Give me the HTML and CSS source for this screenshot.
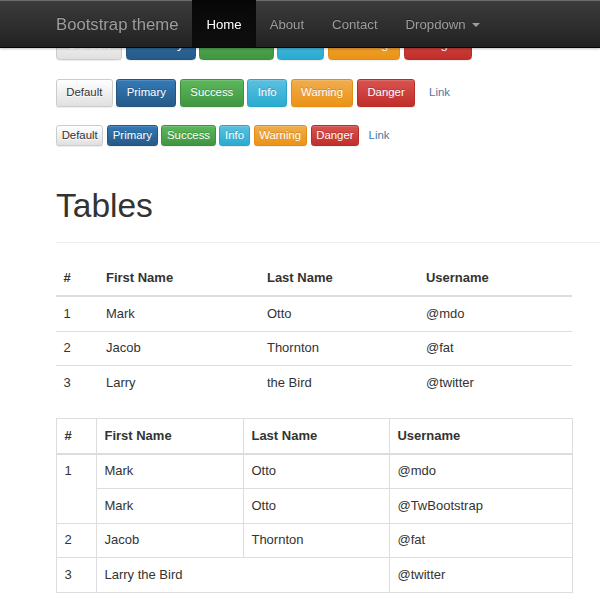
FILE: index.html
```html
<!DOCTYPE html>
<html lang="en">
<head>
<meta charset="utf-8">
<title>Bootstrap theme</title>
<link rel="stylesheet" href="styles.css">
</head>
<body>
<nav class="navbar">
  <a class="brand" href="#">Bootstrap theme</a>
  <ul class="nav">
    <li><a class="nav-link active" href="#">Home</a></li>
    <li><a class="nav-link" href="#">About</a></li>
    <li><a class="nav-link" href="#">Contact</a></li>
    <li><a class="nav-link" href="#">Dropdown <span class="caret"></span></a></li>
  </ul>
</nav>

<main class="main">
  <p class="btn-row">
    <button class="btn btn-default">Default</button>
    <button class="btn btn-primary">Primary</button>
    <button class="btn btn-success">Success</button>
    <button class="btn btn-info">Info</button>
    <button class="btn btn-warning">Warning</button>
    <button class="btn btn-danger">Danger</button>
    <button class="btn btn-link">Link</button>
  </p>
  <p class="btn-row">
    <button class="btn btn-sm btn-default">Default</button>
    <button class="btn btn-sm btn-primary">Primary</button>
    <button class="btn btn-sm btn-success">Success</button>
    <button class="btn btn-sm btn-info">Info</button>
    <button class="btn btn-sm btn-warning">Warning</button>
    <button class="btn btn-sm btn-danger">Danger</button>
    <button class="btn btn-sm btn-link">Link</button>
  </p>
  <p class="btn-row">
    <button class="btn btn-xs btn-default">Default</button>
    <button class="btn btn-xs btn-primary">Primary</button>
    <button class="btn btn-xs btn-success">Success</button>
    <button class="btn btn-xs btn-info">Info</button>
    <button class="btn btn-xs btn-warning">Warning</button>
    <button class="btn btn-xs btn-danger">Danger</button>
    <button class="btn btn-xs btn-link">Link</button>
  </p>

  <div class="page-header">
    <h1>Tables</h1>
  </div>

  <table class="table t-plain">
    <colgroup>
      <col class="w-num"><col class="w-first"><col class="w-last"><col class="w-user">
    </colgroup>
    <thead>
      <tr><th>#</th><th>First Name</th><th>Last Name</th><th>Username</th></tr>
    </thead>
    <tbody>
      <tr><td>1</td><td>Mark</td><td>Otto</td><td>@mdo</td></tr>
      <tr><td>2</td><td>Jacob</td><td>Thornton</td><td>@fat</td></tr>
      <tr><td>3</td><td>Larry</td><td>the Bird</td><td>@twitter</td></tr>
    </tbody>
  </table>

  <table class="table table-bordered t-bordered">
    <colgroup>
      <col class="w-num"><col class="w-first"><col class="w-last"><col class="w-user">
    </colgroup>
    <thead>
      <tr><th>#</th><th>First Name</th><th>Last Name</th><th>Username</th></tr>
    </thead>
    <tbody>
      <tr><td rowspan="2">1</td><td>Mark</td><td>Otto</td><td>@mdo</td></tr>
      <tr><td>Mark</td><td>Otto</td><td>@TwBootstrap</td></tr>
      <tr><td>2</td><td>Jacob</td><td>Thornton</td><td>@fat</td></tr>
      <tr><td>3</td><td colspan="2">Larry the Bird</td><td>@twitter</td></tr>
    </tbody>
  </table>
</main>
</body>
</html>
```

FILE: styles.css
```css
html {
  overflow: hidden;
}
body {
  margin: 0;
  font-family: "Liberation Sans", Arial, sans-serif;
  font-size: 13px;
  line-height: 18.6px;
  color: #333;
  background: #fff;
}

/* Navbar */
.navbar {
  position: fixed;
  top: 0;
  left: 0;
  right: 0;
  z-index: 10;
  height: 46.5px;
  display: flex;
  align-items: stretch;
  padding-left: 42px;
  background-image: linear-gradient(to bottom, #3c3c3c 0%, #222 100%);
  border-bottom: 1px solid #080808;
  box-shadow: inset 0 1px 0 rgba(255,255,255,.25), 0 1px 2px rgba(0,0,0,.25);
}
.brand {
  display: block;
  padding: 15.5px 14px 12.5px;
  font-size: 16.7px;
  line-height: 18.6px;
  color: #9d9d9d;
  text-decoration: none;
  text-shadow: 0 -1px 0 rgba(0,0,0,.25);
}
.nav {
  display: flex;
  margin: 0;
  padding: 0;
  list-style: none;
}
.nav li {
  display: block;
}
.nav-link {
  display: block;
  height: 100%;
  box-sizing: border-box;
  padding: 15.5px 14px 12.5px;
  font-size: 13.2px;
  color: #9d9d9d;
  text-decoration: none;
  text-shadow: 0 -1px 0 rgba(0,0,0,.25);
}
.nav-link.active {
  color: #fff;
  background-image: linear-gradient(to bottom, #080808 0%, #0f0f0f 100%);
  box-shadow: inset 0 3px 9px rgba(0,0,0,.25);
}
.caret {
  display: inline-block;
  width: 0;
  height: 0;
  margin-left: 3px;
  vertical-align: middle;
  border-top: 4px solid #9d9d9d;
  border-left: 4px solid transparent;
  border-right: 4px solid transparent;
}

/* Main */
.main {
  width: 1060px;
  padding: 23.75px 0 0 56px;
}
.btn-row {
  display: flex;
  align-items: center;
  column-gap: 3.8px;
  margin: 0 0 9.3px;
}

.btn {
  display: inline-block;
  margin: 4.65px 0;
  padding: 5.58px 11.16px;
  font-family: inherit;
  font-size: 13.2px;
  line-height: 18.6px;
  font-weight: 400;
  text-align: center;
  white-space: nowrap;
  border: 1px solid transparent;
  border-radius: 3.7px;
  color: #fff;
  text-shadow: 0 -1px 0 rgba(0,0,0,.2);
  box-shadow: inset 0 1px 0 rgba(255,255,255,.15), 0 1px 1px rgba(0,0,0,.075);
  cursor: pointer;
}
.btn-sm {
  padding: 4.65px 9.3px;
  font-size: 11.38px;
  line-height: 16.74px;
  border-radius: 2.8px;
}
.btn-xs {
  padding: 0.93px 4.65px;
  font-size: 11.38px;
  line-height: 16.74px;
  border-radius: 2.8px;
}
.btn-default {
  color: #333;
  text-shadow: 0 1px 0 #fff;
  background-image: linear-gradient(to bottom, #fff 0%, #e0e0e0 100%);
  border-color: #ccc;
}
.btn-primary {
  background-image: linear-gradient(to bottom, #337ab7 0%, #265a88 100%);
  border-color: #245580;
}
.btn-success {
  background-image: linear-gradient(to bottom, #5cb85c 0%, #419641 100%);
  border-color: #3e8f3e;
}
.btn-info {
  background-image: linear-gradient(to bottom, #5bc0de 0%, #2aabd2 100%);
  border-color: #28a4c9;
}
.btn-warning {
  background-image: linear-gradient(to bottom, #f0ad4e 0%, #eb9316 100%);
  border-color: #e38d13;
}
.btn-danger {
  background-image: linear-gradient(to bottom, #d9534f 0%, #c12e2a 100%);
  border-color: #b92c28;
}
.btn-link {
  color: #4a78a6;
  background: none;
  border-color: transparent;
  box-shadow: none;
  text-shadow: none;
}

/* Page header */
.page-header {
  margin: 37.2px 0 18.6px;
  padding-bottom: 8.4px;
  border-bottom: 1px solid #eee;
}
.page-header h1 {
  margin: 0 0 9.3px;
  font-size: 33.5px;
  line-height: 1.1;
  font-weight: 500;
  color: #333;
}

/* Tables */
.table {
  width: 516px;
  table-layout: fixed;
  border-collapse: collapse;
  border-spacing: 0;
  margin-bottom: 18.6px;
}
.table th,
.table td {
  padding: 7.44px;
  line-height: 18.6px;
  text-align: left;
  vertical-align: top;
  border-top: 1px solid #ddd;
}
.table th {
  font-weight: bold;
  vertical-align: bottom;
  border-top: 0;
  border-bottom: 2px solid #ddd;
}
.t-plain .w-num { width: 42.5px; }
.t-plain .w-first { width: 161px; }
.t-plain .w-last { width: 159px; }
.t-plain .w-user { width: 153.5px; }

.table-bordered {
  border: 1px solid #ddd;
}
.table-bordered th,
.table-bordered td {
  border: 1px solid #ddd;
}
.table-bordered th {
  border-bottom-width: 2px;
}
.t-bordered .w-num { width: 40px; }
.t-bordered .w-first { width: 147px; }
.t-bordered .w-last { width: 146px; }
.t-bordered .w-user { width: 183px; }
```
